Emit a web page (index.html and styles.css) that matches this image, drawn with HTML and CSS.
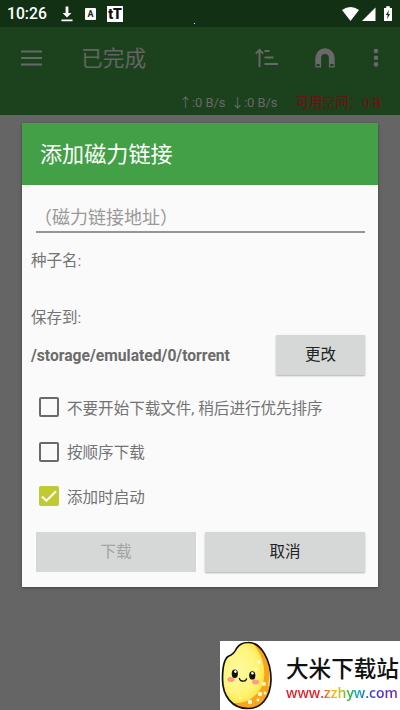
FILE: index.html
```html
<!DOCTYPE html>
<html lang="zh-CN">
<head>
<meta charset="utf-8">
<title>添加磁力链接</title>
<link rel="stylesheet" href="styles.css">
</head>
<body>
<header class="status">
  <span class="clock">10:26</span>
  <svg class="s-down" width="12" height="16" viewBox="0 0 12 16"><path d="M4.600 0.500h2.800v6.500h3L6 11.500 1.600 7h3zM0.500 13.500h11v1.800H0.500z" fill="#fff"/></svg>
  <span class="s-a">A</span>
  <span class="s-tt">tT</span>
  <span class="dot"></span>
  <svg class="s-right" width="52" height="16" viewBox="0 0 52 16" fill="#fff"><path d="M0 4Q8.500-1.800 17 4L8.500 15z"/><path d="M33.500 1.500V15H20z"/><path d="M42 2h2.200V.3h3.600V2H50v13h-8z"/><path d="M47 4l-3.200 5h1.900l-.6 4 3-5h-1.900z" fill="#123014"/></svg>
</header>
<div class="appbar">
  <div class="tools">
    <svg class="menu" width="21" height="16" viewBox="0 0 21 16" stroke="#666a66" stroke-width="2"><path d="M0 1.500h21M0 8h21M0 14.500h21"/></svg>
    <h1>已完成</h1>
    <svg class="sort" width="24" height="20" viewBox="0 0 24 20" fill="none" stroke="#666a66" stroke-width="1.900"><path d="M4.500 19V2M.8 5.600l3.700-3.800 3.700 3.800M9.500 3h5M9.500 9.500h9M9.500 16h13.500"/></svg>
    <svg class="magnet" width="20" height="20" viewBox="0 0 20 20"><path d="M3.200 19.500V10a6.800 6.800 0 0 1 13.600 0v9.500" fill="none" stroke="#6b686b" stroke-width="5.800"/><path d="M1.500 16h3.200v2.200H1.500zM15.300 16h3.200v2.200h-3.200z" fill="#1c421d"/></svg>
    <svg class="more" width="6" height="20" viewBox="0 0 6 20" fill="#6b686b"><circle cx="3" cy="3" r="2.300"/><circle cx="3" cy="9.700" r="2.300"/><circle cx="3" cy="16.400" r="2.300"/></svg>
  </div>
  <div class="stats"><span class="speed-up">↑:0 B/s</span><span class="speed-down">↓:0 B/s</span><span class="space">可用空间：0 B</span></div>
</div>
<main class="dialog">
  <h2>添加磁力链接</h2>
  <div class="body">
    <div class="field">（磁力链接地址）</div>
    <div class="label name">种子名:</div>
    <div class="label save">保存到:</div>
    <div class="path-row"><span class="path">/storage/emulated/0/torrent</span><button class="btn change">更改</button></div>
    <div class="check"><span class="box"></span><span class="caption">不要开始下载文件, 稍后进行优先排序</span></div>
    <div class="check"><span class="box"></span><span class="caption">按顺序下载</span></div>
    <div class="check"><span class="box on"><svg width="20" height="20" viewBox="0 0 20 20"><path d="M3 10.500l4.400 4.300L17 5.200" fill="none" stroke="#fff" stroke-width="2"/></svg></span><span class="caption">添加时启动</span></div>
    <div class="actions"><button class="btn off" disabled>下载</button><button class="btn">取消</button></div>
  </div>
</main>
<aside class="brand">
  <svg class="grain" width="52" height="69" viewBox="0 0 52 69">
    <defs>
      <radialGradient id="g" cx=".36" cy=".42" r=".62"><stop offset="0" stop-color="#fff9a0"/><stop offset=".55" stop-color="#fff47a"/><stop offset=".85" stop-color="#ffe23c"/><stop offset="1" stop-color="#ffc91c"/></radialGradient>
      <clipPath id="c"><path d="M28 1.500C41 1 51 19 51 39 50.500 57 41 67.500 28 67.500 12 67.500 2.500 55 2.500 38 2.500 27 3.500 19 8 15.500 13 13.500 15 11 16.500 7.500 19 3.500 23 1.500 28 1.500z"/></clipPath>
    </defs>
    <g clip-path="url(#c)">
      <path d="M0 0h52v69H0z" fill="url(#g)"/>
      <path d="M31 0C44 14 47 32 42 45 37 56 26 63 12 62v7h40V0z" fill="#f8a51c"/>
      <path d="M31 0C49 10 51 30 48 45l4 2V0z" fill="#ffe07a"/>
    </g>
    <path d="M28 1.500C41 1 51 19 51 39 50.500 57 41 67.500 28 67.500 12 67.500 2.500 55 2.500 38 2.500 27 3.500 19 8 15.500 13 13.500 15 11 16.500 7.500 19 3.500 23 1.500 28 1.500z" fill="none" stroke="#111" stroke-width="1.700"/>
    <g fill="#fff9d8"><circle cx="39" cy="21" r="2"/><circle cx="36" cy="28" r="1.300"/><circle cx="44" cy="43" r="2"/><circle cx="40" cy="53" r="2.200"/><circle cx="45" cy="52" r="1.500"/><circle cx="30" cy="61" r="2.200"/><circle cx="38" cy="59" r="1.400"/><circle cx="20" cy="57" r="1"/><circle cx="11" cy="51" r="1"/></g>
    <ellipse cx="11" cy="38.500" rx="3.500" ry="2.400" fill="#ff9b8c"/><ellipse cx="35.500" cy="41" rx="3.500" ry="2.400" fill="#ff9b8c"/>
    <ellipse cx="14.800" cy="32.700" rx="3.100" ry="4.200" fill="#111"/><ellipse cx="32.300" cy="34.400" rx="3.100" ry="4.200" fill="#111"/>
    <circle cx="15.400" cy="30.600" r="1.300" fill="#fff"/><circle cx="32.400" cy="32.300" r="1.300" fill="#fff"/>
    <path d="M19.500 37.500q.5 2.800 3.200 2.500 3 .5 3.800-2" fill="none" stroke="#111" stroke-width="1.400" stroke-linecap="round"/>
  </svg>
  <div class="brand-text"><strong>大米下载站</strong><span class="url">www.zzhyw.com</span></div>
</aside>
</body>
</html>
```
FILE: styles.css
```css
* { box-sizing: border-box; }
body {
  margin: 0; width: 400px; height: 710px; overflow: hidden;
  position: relative; background: #656565;
  font-family: Roboto, "Noto Sans CJK SC", sans-serif;
}
h1, h2 { margin: 0; font-weight: 400; }
svg { display: block; flex: none; }
.status {
  height: 27px; background: #123014; color: #fff;
  display: flex; align-items: center; padding: 0 7px; position: relative;
}
.clock { width: 54px; font-size: 15.7px; font-weight: 500; line-height: 27px; white-space: nowrap; }
.s-a {
  margin-left: 12px; width: 11px; height: 12px; border-radius: 1px; background: #fff;
  color: #123014; font-size: 9px; font-weight: 700; line-height: 12px; text-align: center;
}
.s-tt {
  margin-left: 11px; width: 16px; height: 16px; background: #fff; color: #111;
  font-size: 14px; font-weight: 900; line-height: 16px; text-align: center;
}
.dot { position: absolute; left: 194px; top: 23px; width: 1px; height: 1px; background: #ddd; }
.s-right { margin-left: auto; margin-right: -1px; }
.appbar { height: 88px; background: #1c421d; color: #666a66; }
.tools { height: 62px; display: flex; align-items: center; padding-left: 21px; }
.tools h1 { margin-left: 39px; width: 174px; padding-top: 2px; font-size: 21.7px; line-height: 32px; color: #626662; }
.magnet { margin-left: 36px; }
.more { margin-left: 37.500px; }
.stats {
  height: 26px; padding-left: 179px; display: flex; white-space: nowrap;
  font-size: 12.9px; line-height: 28px;
}
.speed-up { width: 52px; }
.speed-down { width: 65px; }
.space { color: #621812; font-size: 13.2px; font-weight: 500; }
.dialog {
  width: 356px; height: 464px; margin: 8px 0 0 22px; background: #fafafa;
  box-shadow: 0 1px 3px rgba(0, 0, 0, .35);
}
.dialog h2 {
  height: 62px; padding-left: 18px; background: #43a047; color: #fff;
  font-size: 22.1px; line-height: 63px;
}
.body { padding: 0 13px 0 9px; color: #737373; font-size: 15.5px; }
.field {
  margin-left: 5px; height: 48px; padding-top: 15px; border-bottom: 2px solid #969696;
  font-size: 18px; line-height: 35px; color: #999; text-indent: -2px;
}
.label { line-height: 24px; }
.name { margin-top: 16px; }
.save { margin-top: 33px; }
.path-row { height: 40px; margin-top: 5px; display: flex; justify-content: space-between; align-items: center; }
.path { font-weight: 700; font-size: 15.65px; color: #6b6b6b; }
.btn {
  border: 0; padding: 0; height: 40px; border-radius: 1px; background: #d6d8d7; color: #222;
  font: 400 15.5px/40px Roboto, "Noto Sans CJK SC", sans-serif;
  box-shadow: 0 1px 2px rgba(0, 0, 0, .3);
}
.change { width: 89px; }
.check { height: 44.5px; padding-left: 8px; display: flex; align-items: center; gap: 8px; white-space: nowrap; }
.caption { padding-bottom: 1px; font-size: 15.55px; }
.path-row + .check { margin-top: 10px; }
.box { width: 20px; height: 20px; border: 2px solid #696969; border-radius: 2px; }
.box.on { border: 0; background: #c0ca33; }
.actions { display: grid; grid-template-columns: 160px 160px; gap: 9px; margin: 13px 0 0 5px; }
.off { color: #a2a3a3; box-shadow: none; }
.brand {
  position: absolute; right: 0; bottom: 0; width: 180px; height: 69px;
  background: #fff; display: flex; overflow: hidden;
}
.brand-text { margin-left: 14px; padding-top: 12px; white-space: nowrap; }
.brand-text strong {
  display: block; color: #111; font: 500 22.6px/30px "Noto Sans CJK SC", sans-serif;
}
.url {
  display: block; width: 113px; font: 600 14px/20px "Open Sans", sans-serif;
  background: linear-gradient(90deg, #e6202a 0 32%, #f7941d 38%, #f4c20d 45%, #7bbf2e 52%, #22b14c 57%, #14a5c8 64%, #2a55d0 72%, #4b35c8 82%, #7b2cc0 100%);
  -webkit-background-clip: text; background-clip: text; color: transparent;
}
```
